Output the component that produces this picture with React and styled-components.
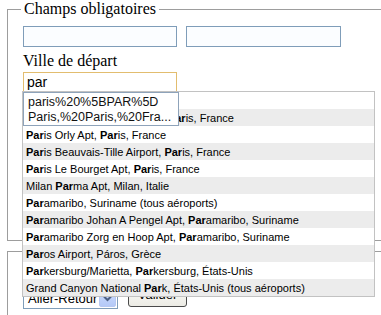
import styled, { createGlobalStyle } from "styled-components";

const GlobalStyle = createGlobalStyle`
  html, body {
    margin: 0;
    padding: 0;
    background: #ffffff;
    overflow: hidden;
  }
  body {
    font-family: "Liberation Serif", "Times New Roman", serif;
    color: #000;
  }
`;

const Page = styled.form`
  width: 381px;
  height: 315px;
  overflow: hidden;
`;

const Fieldset = styled.fieldset`
  width: 430px;
  margin: ${(p) => (p.$first ? "0" : "10px")} 0 0 7px;
  padding: 0 0 0 15px;
  border: 1px solid #9d9d9d;
  min-width: 0;
`;

const Legend = styled.legend`
  margin-left: -2px;
  padding: 0 3px;
  font-size: 16px;
  line-height: 18px;
`;

const InputRow = styled.div`
  display: flex;
  gap: 9px;
  margin-top: 8px;
`;

const TextInput = styled.div`
  box-sizing: border-box;
  width: ${(p) => p.$width}px;
  height: ${(p) => p.$height || 21}px;
  border: 1px solid ${(p) => (p.$focused ? "#e2bd6f" : "#7f9db9")};
  background: ${(p) => (p.$focused ? "#ffffff" : "#fbfdff")};
  font-family: "Liberation Sans", Arial, sans-serif;
  font-size: 14px;
  line-height: 18px;
  padding: 0 3px;
  color: #000;
`;

const Label = styled.div`
  margin-top: 5px;
  font-size: 16px;
  line-height: 18px;
`;

const AutoField = styled.div`
  position: relative;
  margin-top: 2px;
  width: 154px;
`;

const Suggestions = styled.ul`
  position: absolute;
  z-index: 10;
  top: 19px;
  left: -1px;
  width: 351px;
  margin: 0;
  padding: 0;
  list-style: none;
  border: 1px solid #c2c2c2;
  background: #fff;
  font-family: "Liberation Sans", Arial, sans-serif;
  font-size: 11px;
`;

const Suggestion = styled.li`
  box-sizing: border-box;
  height: 17px;
  padding: 1px 0 0 3px;
  line-height: 16px;
  white-space: nowrap;
  background: ${(p) => (p.$odd ? "#ececec" : "#ffffff")};

  b {
    font-weight: bold;
  }
`;

const History = styled.div`
  position: absolute;
  z-index: 20;
  top: 20px;
  left: 0;
  box-sizing: border-box;
  width: 156px;
  height: 34px;
  padding: 2px 4px 0;
  border: 1px solid #8ea3ba;
  background: #fff;
  font-family: "Liberation Sans", Arial, sans-serif;
  font-size: 12.5px;
  line-height: 15px;
  color: #111;
  white-space: nowrap;
  overflow: hidden;
`;

/* space taken by the fields that the open list covers */
const CoveredFields = styled.div`
  height: 148px;
`;

const Controls = styled.div`
  display: flex;
  align-items: flex-end;
  gap: 10px;
  margin-top: 32px;
  padding-bottom: 20px;
`;

const Select = styled.div`
  box-sizing: border-box;
  width: 95px;
  height: 22px;
  display: flex;
  align-items: stretch;
  border: 1px solid #7f9db9;
  background: #fff;
  font-family: "Liberation Sans", Arial, sans-serif;
  font-size: 13px;
`;

const SelectValue = styled.span`
  flex: 1;
  padding: 3px 0 0 4px;
  line-height: 15px;
`;

const ArrowButton = styled.span`
  width: 15px;
  margin: 1px 1px 1px 0;
  display: flex;
  align-items: center;
  justify-content: center;
  border-radius: 2px;
  border: 1px solid #b6c8f2;
  background: linear-gradient(#cddcfd, #b4c9f7);
`;

const Button = styled.div`
  box-sizing: border-box;
  width: 59px;
  height: 23px;
  margin-bottom: 2px;
  border: 1px solid #4a4a4a;
  border-radius: 3px;
  background: linear-gradient(#fdfdfb, #ecebe4);
  font-family: "Liberation Sans", Arial, sans-serif;
  font-size: 13px;
  line-height: 20px;
  text-align: center;
`;

const rows = [
  <>
    <b>Par</b>is, France (tous aéroports)
  </>,
  <>
    <b>Par</b>is Charles de Gaulle Apt, <b>Par</b>is, France
  </>,
  <>
    <b>Par</b>is Orly Apt, <b>Par</b>is, France
  </>,
  <>
    <b>Par</b>is Beauvais-Tille Airport, <b>Par</b>is, France
  </>,
  <>
    <b>Par</b>is Le Bourget Apt, <b>Par</b>is, France
  </>,
  <>
    Milan <b>Par</b>ma Apt, Milan, Italie
  </>,
  <>
    <b>Par</b>amaribo, Suriname (tous aéroports)
  </>,
  <>
    <b>Par</b>amaribo Johan A Pengel Apt, <b>Par</b>amaribo, Suriname
  </>,
  <>
    <b>Par</b>amaribo Zorg en Hoop Apt, <b>Par</b>amaribo, Suriname
  </>,
  <>
    <b>Par</b>os Airport, Páros, Grèce
  </>,
  <>
    <b>Par</b>kersburg/Marietta, <b>Par</b>kersburg, États-Unis
  </>,
  <>
    Grand Canyon National <b>Par</b>k, États-Unis (tous aéroports)
  </>,
];

function App() {
  return (
    <Page>
      <GlobalStyle />
      <Fieldset $first>
        <Legend>Champs obligatoires</Legend>
        <InputRow>
          <TextInput $width={154} />
          <TextInput $width={155} />
        </InputRow>
        <Label>Ville de départ</Label>
        <AutoField>
          <TextInput $width={154} $height={20} $focused>
            par
          </TextInput>
          <History>
            <div>paris%20%5BPAR%5D</div>
            <div>Paris,%20Paris,%20Fra...</div>
          </History>
          <Suggestions>
            {rows.map((row, i) => (
              <Suggestion key={i} $odd={i % 2 === 1}>
                {row}
              </Suggestion>
            ))}
          </Suggestions>
        </AutoField>
        <CoveredFields />
      </Fieldset>
      <Fieldset>
        <Controls>
          <Select>
            <SelectValue>Aller-Retour</SelectValue>
            <ArrowButton>
              <svg width="9" height="7" viewBox="0 0 9 7">
                <path d="M1 1.5 L4.5 5 L8 1.5" fill="none" stroke="#4d6185" strokeWidth="2" />
              </svg>
            </ArrowButton>
          </Select>
          <Button>Valider</Button>
        </Controls>
      </Fieldset>
    </Page>
  );
}

export default App;
